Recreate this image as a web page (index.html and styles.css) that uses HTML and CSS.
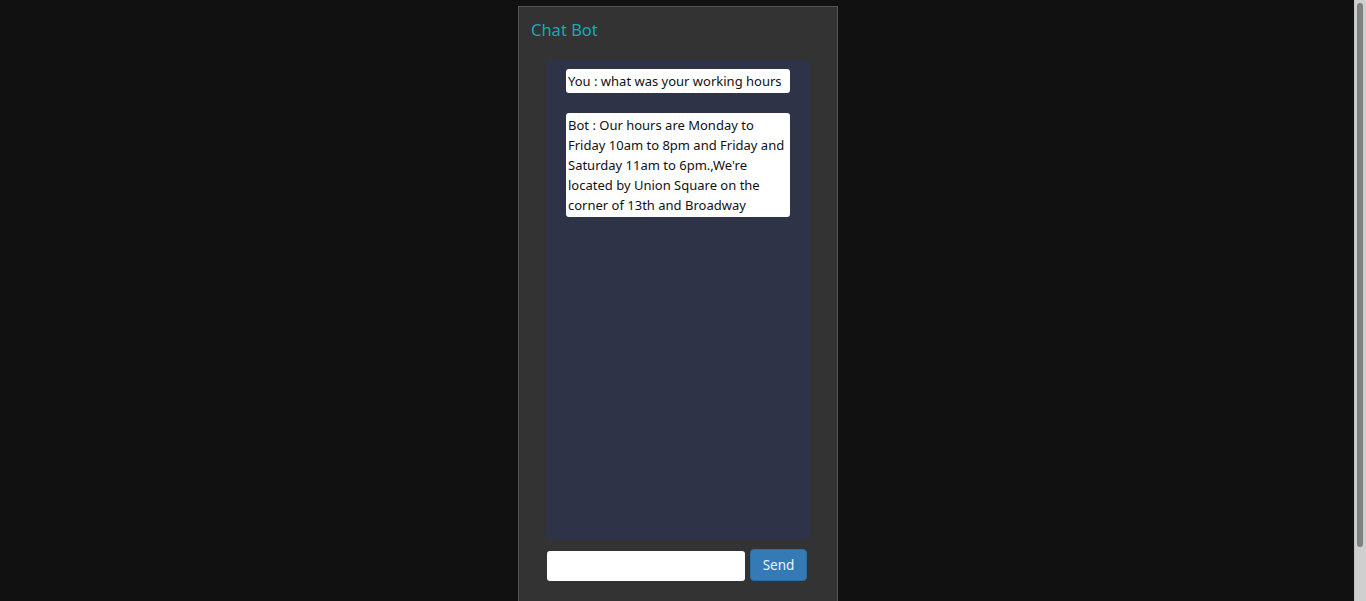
FILE: index.html
```html
<!DOCTYPE html>
<html lang="en">
<head>
<meta charset="utf-8">
<title>Chat Bot</title>
<link rel="stylesheet" href="styles.css">
</head>
<body>
<div class="panel">
  <h3 class="title">Chat Bot</h3>
  <div class="chat">
    <div class="msg">You : what was your working hours</div>
    <div class="msg">Bot : Our hours are Monday to Friday 10am to 8pm and Friday and Saturday 11am to 6pm.,We're located by Union Square on the corner of 13th and Broadway</div>
  </div>
  <form class="composer">
    <input class="field" type="text">
    <button class="send" type="button">Send</button>
  </form>
</div>
<div class="scrollbar"><div class="thumb"></div></div>
</body>
</html>
```
FILE: styles.css
```css
html, body {
  margin: 0;
  padding: 0;
  background: #111111;
}
body {
  padding-right: 10px;
  font-family: "Noto Sans", "DejaVu Sans", sans-serif;
  font-size: 13px;
  line-height: 20px;
  color: #111;
}
.panel {
  width: 318px;
  height: 652px;
  margin: 6px auto 0;
  background: #333333;
  border: 1px solid #555555;
  box-sizing: content-box;
}
.title {
  margin: 0;
  padding: 12px 12px 0;
  height: 41px;
  font-size: 16.5px;
  font-weight: normal;
  line-height: 22px;
  color: #17a8b8;
}
.chat {
  width: 264px;
  height: 471px;
  margin: 0 auto;
  padding-top: 9px;
  background: #2e3347;
  border-radius: 4px;
}
.msg {
  width: 220px;
  padding: 2px;
  margin: 0 auto 20px;
  background: #ffffff;
  border-radius: 3px;
}
.composer {
  display: flex;
  align-items: flex-end;
  gap: 5px;
  margin: 9px 0 0;
  padding-left: 28px;
}
.field {
  width: 198px;
  height: 30px;
  box-sizing: border-box;
  border: none;
  border-radius: 3px;
  background: #fff;
  margin: 0;
}
.send {
  width: 57px;
  height: 32px;
  margin: 0;
  padding: 0;
  background: #337ab7;
  border: 1px solid #2e6da4;
  border-radius: 4px;
  color: #eef3f8;
  font-family: "Noto Sans", "DejaVu Sans", sans-serif;
  font-size: 13.5px;
}
.scrollbar {
  position: fixed;
  top: 0;
  right: 0;
  width: 12px;
  height: 100%;
  background: #cfcfcf;
  border-left: 1px solid #c4c4c4;
  box-sizing: border-box;
}
.thumb {
  width: 6px;
  height: 544px;
  margin: 3px 0 0 2px;
  background: #7d8180;
  border-radius: 3px;
}
```
